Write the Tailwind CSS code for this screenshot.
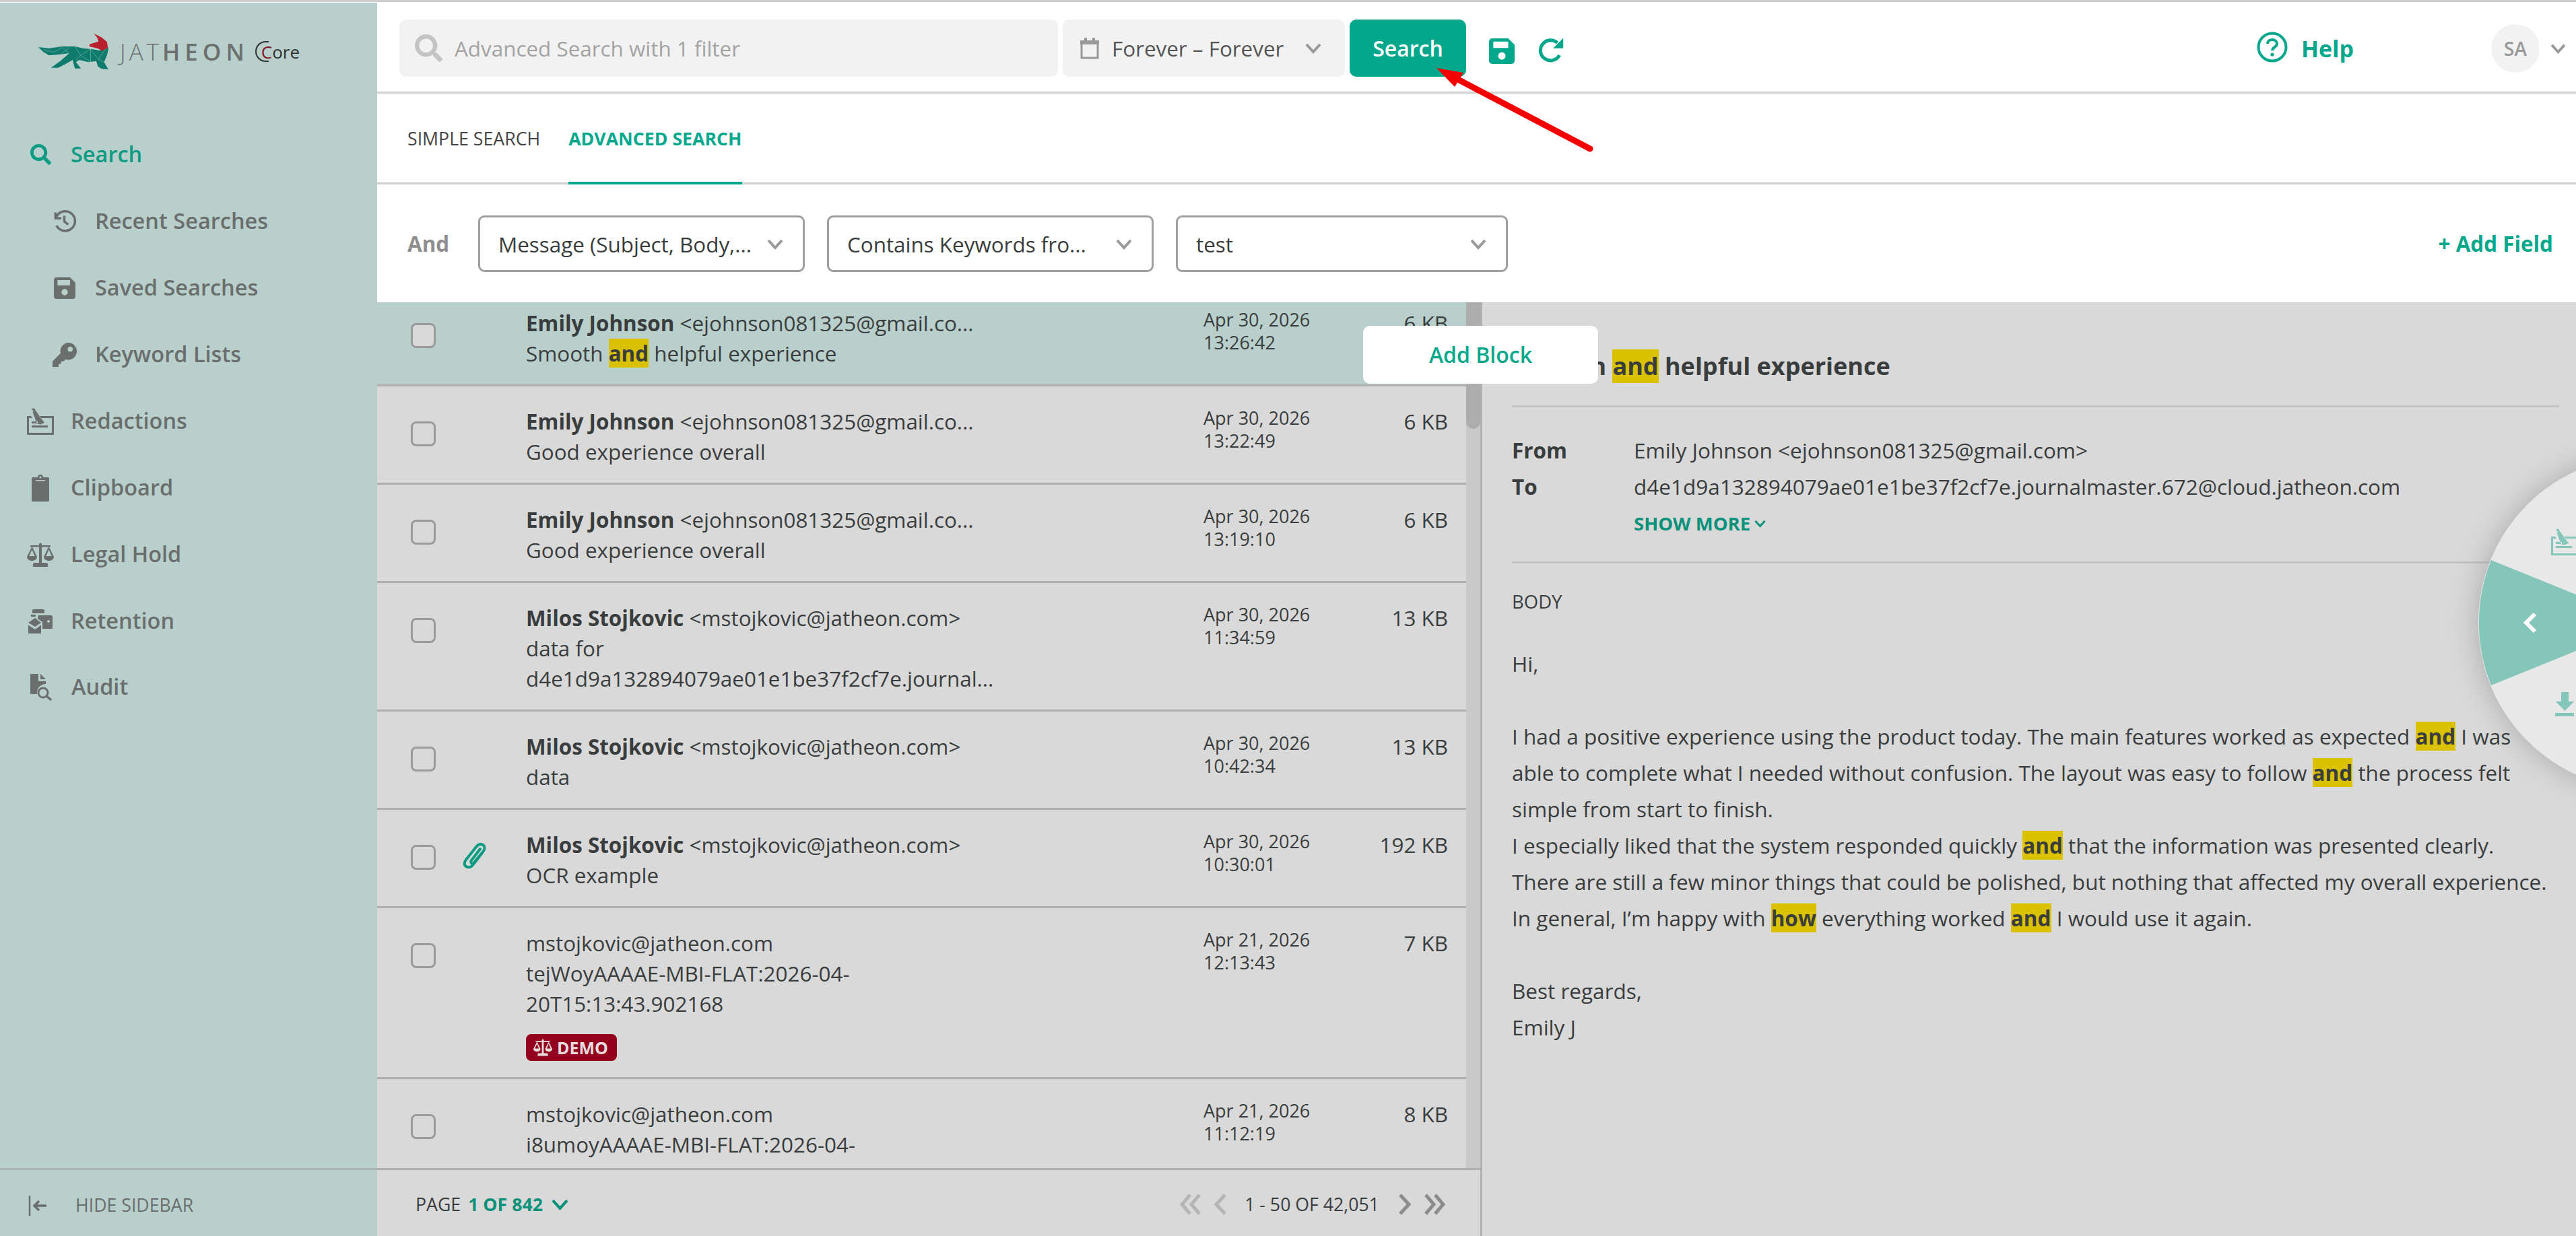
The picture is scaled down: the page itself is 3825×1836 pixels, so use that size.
<!DOCTYPE html>
<html lang="en">
<head>
  <meta charset="UTF-8">
  <title>Jatheon Core - Advanced Search</title>
  <script src="https://cdn.jsdelivr.net/npm/@tailwindcss/browser@4"></script>
</head>
<body class="bg-white">
  <!-- Shared icons -->
  <svg class="hidden">
    <symbol id="i-search" viewBox="0 0 512 512"><path fill="currentColor" d="M505 442.7L405.3 343c-4.5-4.5-10.6-7-17-7H372c27.6-35.3 44-79.7 44-128C416 93.1 322.9 0 208 0S0 93.1 0 208s93.1 208 208 208c48.3 0 92.7-16.4 128-44v16.3c0 6.4 2.5 12.5 7 17l99.7 99.7c9.4 9.4 24.6 9.4 33.9 0l28.3-28.3c9.4-9.4 9.4-24.6.1-34zM208 336c-70.7 0-128-57.2-128-128 0-70.7 57.2-128 128-128 70.7 0 128 57.2 128 128 0 70.7-57.2 128-128 128z"/></symbol>
    <symbol id="i-save" viewBox="0 0 24 24"><path fill="currentColor" fill-rule="evenodd" d="M3 0h15l6 6v15a3 3 0 0 1-3 3H3a3 3 0 0 1-3-3V3a3 3 0 0 1 3-3zM4 3v6h14V3zM12 13a3.5 3.5 0 1 0 0 7 3.5 3.5 0 0 0 0-7z"/></symbol>
    <symbol id="i-scale" viewBox="0 0 40 36"><path fill="currentColor" fill-rule="evenodd" d="M18 2.5a2 2 0 0 1 4 0V4h12a1 1 0 0 1 0 2.400h-1.200L40 21c0 3.500-3.400 6-7.500 6S25 24.500 25 21l7-14.600H22V30h7a2 2 0 0 1 2 2v4H9v-4a2 2 0 0 1 2-2h7V6.400H8L15 21c0 3.500-3.400 6-7.500 6S0 24.500 0 21L7.200 6.400H6A1 1 0 0 1 6 4h12zM7.500 10.500L3.400 20h8.200zM32.500 10.500L28.400 20h8.200z"/></symbol>
    <symbol id="i-redact" viewBox="0 0 40 40"><path fill="currentColor" fill-rule="evenodd" d="M7 2l3-2 3 3-3 2zM8.500 6l4-2.500L26 22l-6 2.500-5-1zM0 12h6l2 3H3v22h34V15H20l-2-3h22v26.500a1.500 1.500 0 0 1-1.500 1.500h-37A1.500 1.500 0 0 1 0 38.500zM7 20h9v3H7zM7 26h24v3H7z"/></symbol>
    <symbol id="i-chev" viewBox="0 0 24 16"><path fill="none" stroke="currentColor" stroke-width="4" d="M2 2l10 11L22 2"/></symbol>
  </svg>

  <div class="relative w-[3825px] h-[1836px] overflow-hidden flex flex-col font-['Open_Sans',sans-serif] text-[#3a3d3d]">
    <div class="h-[4px] shrink-0 border-t-[3px] border-[#cfcfcf] bg-white"></div>
    <div class="flex flex-1 min-h-0">

      <!-- Sidebar -->
      <aside class="w-[560px] shrink-0 flex flex-col bg-[#b9cfcc] text-[#6a6e6d] font-semibold text-[32.5px]">
        <div class="h-[176px] shrink-0 pl-[56px] pt-[45px]">
          <div class="h-[55px] flex items-center">
            <svg width="107" height="55" viewBox="50 40 320 165">
              <path fill="#0f7b6c" d="M52 103L100 108 160 100 215 100 250 108 290 112 325 118 360 100 365 110 358 140 345 170 364 202 335 200 318 190 310 165 275 170 235 160 220 170 242 198 215 198 205 160 170 180 140 195 108 195 150 165 190 130 150 135 100 140 75 125z"/>
              <path fill="none" stroke="#7dbdb1" stroke-width="1.800" d="M75 115l45 10 40-20 30 25M215 100l25 40 45-28 35 45 35-50M240 140l-20 20M240 140l45 28M285 112l0 56M320 157l25 13M150 135l40-30"/>
              <path fill="#b8202e" d="M300 42L335 60 358 80 362 105 335 120 320 110 280 100 280 90 320 78 315 62z"/>
            </svg>
            <span class="ml-[15px] text-[35px] leading-[40px] font-light tracking-[5px] text-[#6b6f6e]">JAT<span class="font-semibold tracking-[7px]">HEON</span></span>
            <span class="ml-[9px] flex items-center text-[#2f3334] text-[26px] font-normal leading-[32px]"><span class="w-[20px] h-[31px] -mr-[11px] border-l-[2px] border-y-[2px] rounded-l-full border-[#2f3334]"></span><span class="text-[#7c1a26]">C</span>ore</span>
          </div>
        </div>
        <nav class="flex flex-col">
          <a class="h-[99px] flex items-center pl-[45px] gap-[29px] text-[#0a9c83]"><svg class="w-[31px] h-[31px]"><use href="#i-search"/></svg>Search</a>
          <a class="h-[99px] flex items-center pl-[78px] gap-[28px]">
            <svg class="w-[35px] h-[35px]" viewBox="0 0 24 24" fill="none" stroke="currentColor" stroke-width="2.400"><path d="M3 3v6h6"/><path d="M3.500 8.500A10 10 0 1 1 4 16.500"/><path d="M12 6.500V12.500l4 3"/></svg>
            Recent Searches</a>
          <a class="h-[99px] flex items-center pl-[80px] gap-[29px]"><svg class="w-[32px] h-[34px]"><use href="#i-save"/></svg>Saved Searches</a>
          <a class="h-[99px] flex items-center pl-[78px] gap-[27px]">
            <svg class="w-[36px] h-[36px]" viewBox="0 0 24 24"><path fill="currentColor" fill-rule="evenodd" d="M15.500 0A8.500 8.500 0 0 1 24 8.500c0 5-4 8.500-8.500 8.500-1 0-1.800-.2-2.600-.5L11 18.500H8.500V21H6v3H0v-5.500l8-8a8.500 8.500 0 0 1 7.500-10.500zM17.500 4a2.500 2.500 0 1 0 0 5 2.500 2.500 0 0 0 0-5z"/></svg>
            Keyword Lists</a>
          <a class="h-[99px] flex items-center pl-[40px] gap-[25px]"><svg class="w-[40px] h-[40px]"><use href="#i-redact"/></svg>Redactions</a>
          <a class="h-[99px] flex items-center pl-[47px] gap-[32px]">
            <svg class="w-[26px] h-[40px]" viewBox="0 0 26 40"><path fill="currentColor" fill-rule="evenodd" d="M2 4h7a4 4 0 0 1 8 0h7a2 2 0 0 1 2 2v32a2 2 0 0 1-2 2H2a2 2 0 0 1-2-2V6a2 2 0 0 1 2-2zM13 2.500a1.500 1.500 0 1 0 0 3 1.500 1.500 0 0 0 0-3zM6 8v1.500h14V8z"/></svg>
            Clipboard</a>
          <a class="h-[99px] flex items-center pl-[40px] gap-[25px]"><svg class="w-[40px] h-[36px]"><use href="#i-scale"/></svg>Legal Hold</a>
          <a class="h-[99px] flex items-center pl-[42px] gap-[27px]">
            <svg class="w-[36px] h-[36px]" viewBox="0 0 36 36"><path fill="currentColor" d="M6 2a2 2 0 0 1 2-2h14a2 2 0 0 1 2 2v4H6zM4 8h7v3H4zM14 11a2 2 0 0 1 2-2h18a2 2 0 0 1 2 2v17a1 1 0 0 1-1 1H21V19l-7-5zM0 20l10-7 9 7-9 6zM0 23.500l10 6.500 9-6.500V36H0z"/><circle cx="30" cy="18" r="2" fill="#b9cfcc"/></svg>
            Retention</a>
          <a class="h-[99px] flex items-center pl-[45px] gap-[29px] -mt-[1px]">
            <svg class="w-[32px] h-[40px]" viewBox="0 0 32 40"><path fill="currentColor" d="M0 1a1 1 0 0 1 1-1h11v11h11v4a13 13 0 0 0-13 15H1a1 1 0 0 1-1-1zM15 0l8 8h-8z"/><circle cx="19" cy="28" r="7" fill="none" stroke="currentColor" stroke-width="3"/><path stroke="currentColor" stroke-width="3.500" stroke-linecap="round" d="M24 33l6 5"/></svg>
            Audit</a>
        </nav>
        <div class="mt-auto h-[101px] shrink-0 border-t-[3px] border-[#adb5b3] flex items-center pt-[7px] pl-[42px] gap-[42px] text-[26.7px] font-normal text-[#6a6e6d]">
          <svg class="w-[28px] h-[30px]" viewBox="0 0 28 30" fill="none" stroke="currentColor" stroke-width="2.500"><path d="M2 0v30"/><path stroke-width="3.500" d="M27 15H9M16 8l-7 7 7 7"/></svg>
          HIDE SIDEBAR
        </div>
      </aside>

      <!-- Main -->
      <main class="flex-1 min-w-0 flex flex-col">
        <header class="h-[135px] shrink-0 border-b-[3px] border-[#cfcfcf] flex items-start pt-[25px] pl-[33px]">
          <div class="w-[978px] h-[85px] rounded-[10px] bg-[#f2f2f2] flex items-center pl-[23px] gap-[18px] text-[#a3a3a3] text-[31.4px]">
            <svg class="w-[41px] h-[41px] text-[#c4c4c4]"><use href="#i-search"/></svg>Advanced Search with 1 filter
          </div>
          <div class="ml-[7px] w-[419px] h-[85px] rounded-[10px] bg-[#f2f2f2] flex items-center pl-[26px] text-[31.4px] text-[#555]">
            <svg class="w-[28px] h-[32px] text-[#999]" viewBox="0 0 28 32"><path fill="none" stroke="currentColor" stroke-width="3" d="M2 6h24v24H2z"/><path fill="currentColor" d="M0 4h28v6H0zM6 0h4v5H6zM18 0h4v5h-4z"/></svg>
            <span class="ml-[19px]">Forever – Forever</span>
            <svg class="ml-[32px] w-[24px] h-[16px] text-[#999]"><use href="#i-chev"/></svg>
          </div>
          <button class="ml-[7px] w-[173px] h-[85px] rounded-[10px] bg-[#03a88c] text-white font-semibold text-[32px]">Search</button>
          <svg class="ml-[34px] mt-[28px] w-[38px] h-[38px] text-[#03a88c]"><use href="#i-save"/></svg>
          <svg class="ml-[34px] mt-[26px] w-[40px] h-[38px] text-[#03a88c]" viewBox="0 0 24 24" fill="none" stroke="currentColor" stroke-width="3.200"><path d="M20 17a9.500 9.500 0 1 1-2-11.500"/><path fill="currentColor" stroke="none" d="M23.500 1v9.500H14z"/></svg>
          <div class="ml-auto flex items-center h-[96px] -mt-[5px] pr-[15px]">
            <svg class="w-[46px] h-[46px] -mt-[5px] text-[#03a88c]" viewBox="0 0 46 46"><circle cx="23" cy="23" r="20.500" fill="none" stroke="currentColor" stroke-width="4"/><path fill="none" stroke="currentColor" stroke-width="4" d="M16 18c0-4 3-6 7-6s7 2.500 7 6c0 5-7 5-7 10"/><circle cx="23" cy="34" r="2.600" fill="currentColor"/></svg>
            <span class="ml-[20px] w-[282px] text-[34px] font-bold text-[#03a88c]">Help</span>
            <span class="w-[72px] h-[72px] rounded-full bg-[#f2f2f2] flex items-center justify-center text-[28px] font-semibold text-[#999]">SA</span>
            <svg class="ml-[16px] w-[23px] h-[15px] text-[#999]"><use href="#i-chev"/></svg>
          </div>
        </header>

        <nav class="h-[135px] shrink-0 border-b-[3px] border-[#cfcfcf] flex items-stretch pl-[45px] text-[26.7px]">
          <a class="flex items-center pt-[3px] text-[#444] mr-[42px]">SIMPLE SEARCH</a>
          <a class="flex items-center pt-[3px] font-bold text-[#03a88c] border-b-[4px] border-[#03a88c] -mb-[3px]">ADVANCED SEARCH</a>
        </nav>

        <section class="h-[175px] shrink-0 flex items-center pl-[45px] pr-[34px] text-[31.4px]">
          <span class="w-[105px] font-bold text-[#8e8e8e]">And</span>
          <div class="w-[485px] h-[84px] rounded-[9px] border-[3px] border-[#a0a0a0] flex items-center justify-between pt-[2px] pl-[27px] pr-[29px]">Message (Subject, Body,...<svg class="w-[24px] h-[16px] text-[#999]"><use href="#i-chev"/></svg></div>
          <div class="ml-[33px] w-[485px] h-[84px] rounded-[9px] border-[3px] border-[#a0a0a0] flex items-center justify-between pt-[2px] pl-[27px] pr-[29px]">Contains Keywords fro...<svg class="w-[24px] h-[16px] text-[#999]"><use href="#i-chev"/></svg></div>
          <div class="ml-[33px] w-[493px] h-[84px] rounded-[9px] border-[3px] border-[#a0a0a0] flex items-center justify-between pt-[2px] pl-[27px] pr-[29px]">test<svg class="w-[24px] h-[16px] text-[#999]"><use href="#i-chev"/></svg></div>
          <a class="ml-auto font-bold text-[#03a88c]">+ Add Field</a>
        </section>

        <div class="flex-1 min-h-0 flex bg-[#d9d9d9]">
          <!-- Results -->
          <section class="w-[1641px] shrink-0 flex flex-col border-r-[3px] border-[#b0b0b0]">
            <div class="flex-1 min-h-0 flex">
              <div id="rows" class="flex-1 min-w-0 overflow-hidden"></div>
              <div class="w-[21px] shrink-0 bg-[#c9c9c9]"><div class="h-[188px] rounded-b-full bg-[#adadad]"></div></div>
            </div>
            <div class="h-[101px] shrink-0 border-t-[3px] border-[#b0b0b0] flex items-center pt-[5px] pl-[57px] text-[26.7px]">
              <span>PAGE</span>
              <span class="ml-[11px] font-bold text-[#0a917a]">1 OF 842</span>
              <svg class="ml-[12px] w-[27px] h-[17px] text-[#0a917a]"><use href="#i-chev"/></svg>
              <div class="ml-auto flex items-center pr-[52px] text-[#9a9a9a]">
                <svg class="w-[32px] h-[32px] text-[#b5b5b5]" viewBox="0 0 32 32" fill="none" stroke="currentColor" stroke-width="5"><path d="M15 2L3 16l12 14M29 2L17 16l12 14"/></svg>
                <svg class="ml-[19px] w-[19px] h-[32px] text-[#b5b5b5]" viewBox="0 0 19 32" fill="none" stroke="currentColor" stroke-width="5"><path d="M16 2L3 16l13 14"/></svg>
                <span class="ml-[26px] text-[#3a3d3d]">1 - 50 OF 42,051</span>
                <svg class="ml-[28px] w-[19px] h-[32px] text-[#8c8c8c]" viewBox="0 0 19 32" fill="none" stroke="currentColor" stroke-width="5"><path d="M3 2l13 14L3 30"/></svg>
                <svg class="ml-[19px] w-[32px] h-[32px] text-[#8c8c8c]" viewBox="0 0 32 32" fill="none" stroke="currentColor" stroke-width="5"><path d="M3 2l12 14L3 30M17 2l12 14-12 14"/></svg>
              </div>
            </div>
          </section>

          <!-- Message preview -->
          <article class="flex-1 min-w-0 pl-[44px] pr-[25px]">
            <div class="h-[156px] border-b-[3px] border-[#c4c4c4] pt-[70px] pl-[1px] text-[36px] leading-[50px] font-bold">Smooth <mark class="bg-[#dbc200] text-inherit inline-block leading-[50px]">and</mark> helpful experience</div>
            <dl class="h-[232px] border-b-[3px] border-[#c4c4c4] pt-[37px] text-[31.5px] leading-[54px]">
              <div class="flex"><dt class="w-[181px] font-bold">From</dt><dd>Emily Johnson &lt;ejohnson081325@gmail.com&gt;</dd></div>
              <div class="flex"><dt class="w-[181px] font-bold">To</dt><dd>d4e1d9a132894079ae01e1be37f2cf7e.journalmaster.672@cloud.jatheon.com</dd></div>
              <div class="pl-[181px] pt-[1px] flex items-center text-[27.5px] font-bold text-[#0a917a]">SHOW MORE<svg class="ml-[6px] w-[17px] h-[12px]"><use href="#i-chev"/></svg></div>
            </dl>
            <h4 class="mt-[43px] text-[27.5px] leading-[28px]">BODY</h4>
            <div class="mt-[51px] text-[31.5px] leading-[54px]">
              <p>Hi,</p>
              <p class="mt-[54px]">I had a positive experience using the product today. The main features worked as expected <mark class="bg-[#dbc200] text-inherit font-bold">and</mark> I was<br>able to complete what I needed without confusion. The layout was easy to follow <mark class="bg-[#dbc200] text-inherit font-bold">and</mark> the process felt<br>simple from start to finish.<br>I especially liked that the system responded quickly <mark class="bg-[#dbc200] text-inherit font-bold">and</mark> that the information was presented clearly.<br>There are still a few minor things that could be polished, but nothing that affected my overall experience.<br>In general, I’m happy with <mark class="bg-[#dbc200] text-inherit font-bold">how</mark> everything worked <mark class="bg-[#dbc200] text-inherit font-bold">and</mark> I would use it again.</p>
              <p class="mt-[54px]">Best regards,<br>Emily J</p>
            </div>
          </article>
        </div>
      </main>
    </div>

    <!-- Add Block popup -->
    <button class="absolute left-[2024px] top-[484px] w-[349px] h-[86px] rounded-[10px] bg-white text-[32px] font-semibold text-[#03a88c]">Add Block</button>

    <!-- Radial menu -->
    <svg class="absolute left-[3640px] top-[660px] overflow-visible drop-shadow-[0_0_22px_rgba(0,0,0,0.22)]" width="185" height="530" viewBox="3640 660 185 530">
      <circle cx="3928" cy="925" r="248" fill="#e8e8e8"/>
      <path fill="#84c6ba" d="M3928 925L3699 832A248 248 0 0 0 3699 1018z"/>
      <path fill="none" stroke="#fff" stroke-width="6" d="M3764 912l-13 13 13 13"/>
      <g class="text-[#84c6ba]"><use href="#i-redact" x="3788" y="785" width="40" height="40"/></g>
      <path fill="#84c6ba" d="M3803 1028h11v14h8l-13.500 14-13.500-14h8zM3794 1059h28v5h-28z"/>
    </svg>

    <!-- Red annotation arrow -->
    <svg class="absolute left-0 top-0 pointer-events-none" width="3825" height="1836" viewBox="0 0 3825 1836">
      <path stroke="#f40000" stroke-width="9" stroke-linecap="round" d="M2361 221L2163 117"/>
      <path fill="#f40000" d="M2133 101L2173 108 2160 129z"/>
    </svg>
  </div>

  <script>
    // Result rows shown in the list
    const emily = '<b class="font-bold">Emily Johnson</b> &lt;ejohnson081325@gmail.co...';
    const milos = '<b class="font-bold">Milos Stojkovic</b> &lt;mstojkovic@jatheon.com&gt;';
    const plain = 'mstojkovic@jatheon.com';
    const rows = [
      { from: emily, subject: 'Smooth <mark class="bg-[#dbc200] text-inherit font-bold">and</mark> helpful experience', date: 'Apr 30, 2026', time: '13:26:42', size: '6 KB', selected: true },
      { from: emily, subject: 'Good experience overall', date: 'Apr 30, 2026', time: '13:22:49', size: '6 KB' },
      { from: emily, subject: 'Good experience overall', date: 'Apr 30, 2026', time: '13:19:10', size: '6 KB' },
      { from: milos, subject: 'data for d4e1d9a132894079ae01e1be37f2cf7e.journal...', date: 'Apr 30, 2026', time: '11:34:59', size: '13 KB' },
      { from: milos, subject: 'data', date: 'Apr 30, 2026', time: '10:42:34', size: '13 KB' },
      { from: milos, subject: 'OCR example', date: 'Apr 30, 2026', time: '10:30:01', size: '192 KB', attachment: true },
      { from: plain, subject: 'tejWoyAAAAE-MBI-FLAT:2026-04-20T15:13:43.902168', date: 'Apr 21, 2026', time: '12:13:43', size: '7 KB', demo: true },
      { from: plain, subject: 'i8umoyAAAAE-MBI-FLAT:2026-04-20T14:10:10.907704', date: 'Apr 21, 2026', time: '11:12:19', size: '8 KB' },
    ];

    const clip = `<svg class="w-[36px] h-[41px] mt-[-8px] ml-[40px] text-[#0a9c83]" viewBox="0 0 36 41" fill="none" stroke="currentColor" stroke-width="4" stroke-linecap="round"><path d="M29 16L15 34c-3 4-7 4-10 2s-3-6 0-10L20 7c3-4 7-5 10-3s3 6 1 9L17 30c-1 2-3 2-4 1s-1-3 0-4l13-17"/></svg>`;
    const badge = `<div class="mt-[23px] w-[135px] h-[40px] rounded-[8px] bg-[#93001e] text-[#e6dcdc] flex items-center pl-[11px] gap-[7px] text-[25px] font-bold leading-none"><svg class="w-[28px] h-[28px]"><use href="#i-scale"/></svg>DEMO</div>`;

    document.getElementById("rows").innerHTML = rows.map((row, index) => `
      <div class="flex border-b-[3px] border-[#b0b0b0] pt-[29px] pb-[24px] ${row.selected ? "bg-[#b9cfcc]" : ""} ${index === 0 ? "-mt-[21px]" : ""}">
        <span class="ml-[50px] mt-[23px] w-[37px] h-[37px] shrink-0 rounded-[8px] border-[3px] border-[#9b9b9b] bg-[#d9d9d9]"></span>
        <div class="w-[134px] shrink-0 pt-[27px]">${row.attachment ? clip : ""}</div>
        <div class="w-[1006px] shrink-0 text-[31.4px] leading-[45px]">
          <div>${row.from}</div>
          <div class="w-[700px]">${row.subject}</div>
          ${row.demo ? badge : ""}
        </div>
        <div class="w-[250px] shrink-0 pt-[1px] text-[27px] leading-[34px]">${row.date}<br>${row.time}</div>
        <div class="flex-1 pr-[27px] text-right text-[31.4px] leading-[46px]">${row.size}</div>
      </div>`).join("");
  </script>
</body>
</html>
